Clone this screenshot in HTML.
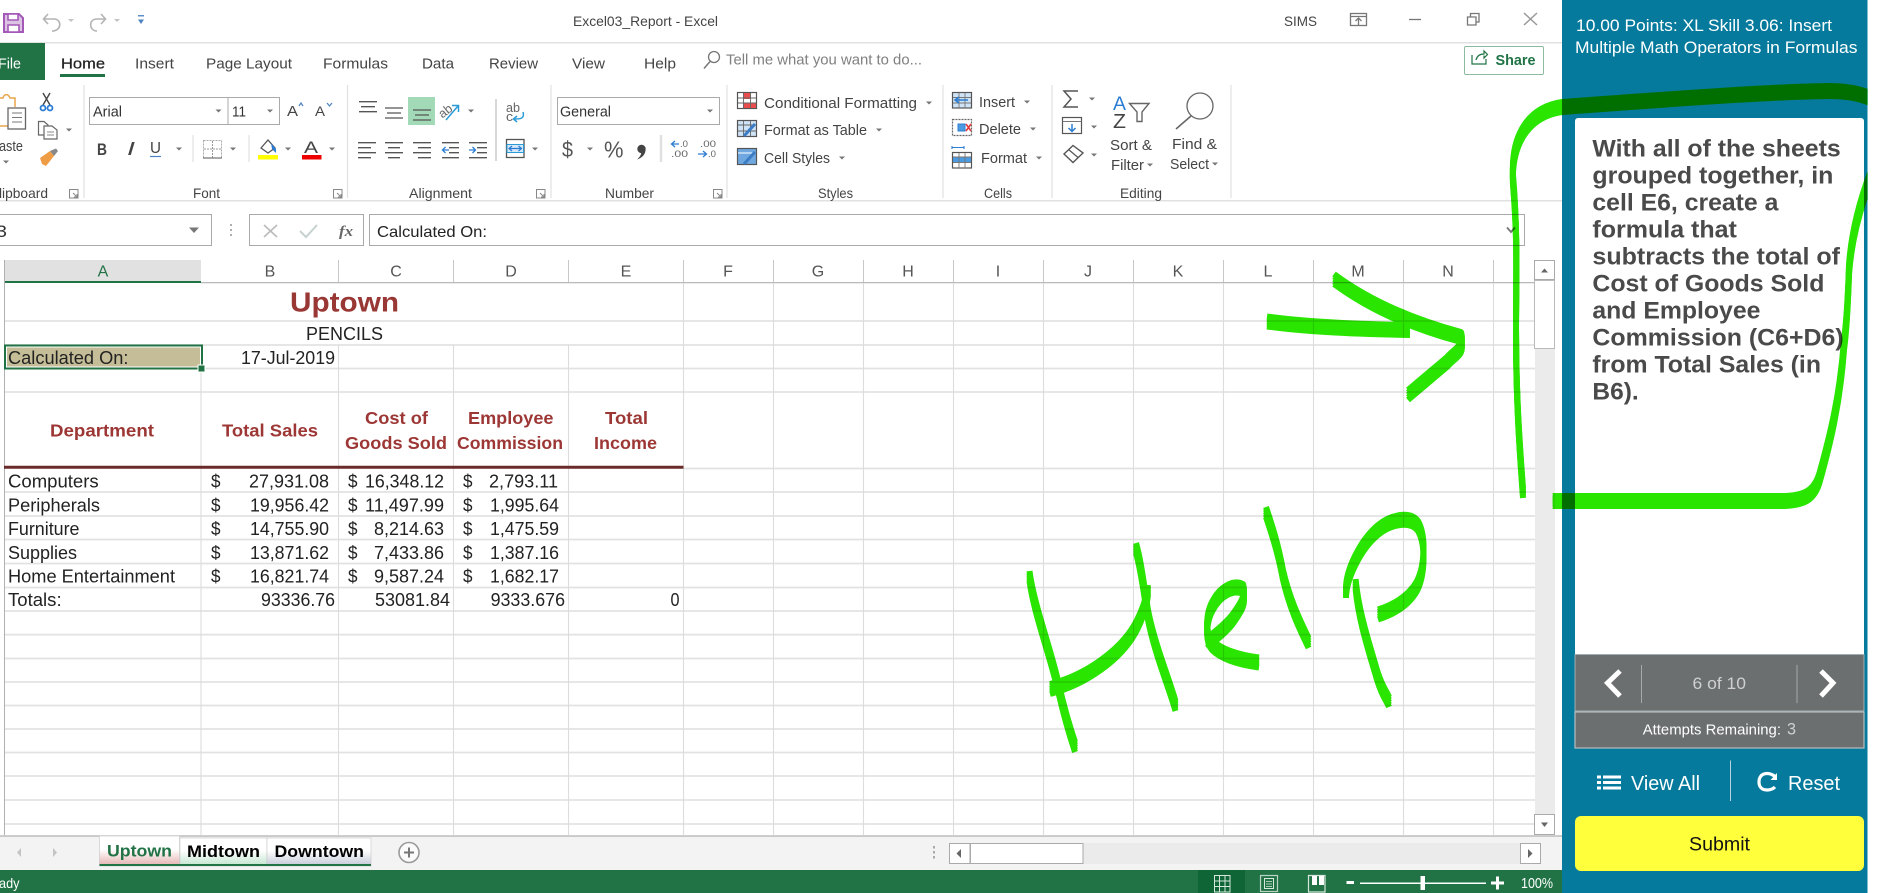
<!DOCTYPE html>
<html><head><meta charset="utf-8"><title>Excel03_Report - Excel</title>
<style>
html,body{margin:0;padding:0;background:#fff;width:1888px;height:893px;overflow:hidden}
svg{display:block;position:absolute;left:0;top:0}
text{font-family:"Liberation Sans",Arial,sans-serif;white-space:pre}
.r{font-size:14.5px;fill:#444}
.l{font-size:14px;fill:#444}
.h{font-size:16px;fill:#555;text-anchor:middle}
.s{font-size:18px;fill:#222}
.b{font-size:17.5px;fill:#9c3735;font-weight:bold}
.c{font-size:24px;fill:#4a4a4a;font-weight:bold}
.w{fill:#fff}
</style></head><body>
<svg width="1888" height="893" viewBox="0 0 1888 893" xmlns="http://www.w3.org/2000/svg">
<defs>
<linearGradient id="g1" x1="0" y1="0" x2="0" y2="1"><stop offset="0" stop-color="#fff"/><stop offset=".45" stop-color="#fff"/><stop offset="1" stop-color="#e3b0ae"/></linearGradient>
<linearGradient id="g2" x1="0" y1="0" x2="0" y2="1"><stop offset="0" stop-color="#fff"/><stop offset=".45" stop-color="#fff"/><stop offset="1" stop-color="#bfe5cd"/></linearGradient>
<linearGradient id="g3" x1="0" y1="0" x2="0" y2="1"><stop offset="0" stop-color="#fff"/><stop offset=".45" stop-color="#fff"/><stop offset="1" stop-color="#c3c8d6"/></linearGradient>
<clipPath id="inkclip"><rect x="0" y="0" width="1867.5" height="893"/></clipPath>
<path id="ink" d="M1523 493C1519 440 1516 393 1516 330C1516 280 1518 240 1513 180C1511 140 1528 112 1562 107C1660 100 1760 92 1829 91C1845 91 1858 93 1870 98
M1870 178C1858 210 1851 240 1849 270C1848 300 1846 330 1844 345C1840 400 1830 440 1820 476C1815 495 1805 501 1781 501C1700 501 1623 501 1552.7 501
M1267 321.500C1300 326 1340 329 1410 330
M1334 279C1365 302 1405 322 1461 337C1465 350 1456 352 1447 362L1408 395
M1029.500 576C1034 610 1050 650 1059 690C1066 720 1071 735 1075 747
M1050 689C1085 680 1122 655 1137 625C1143 613 1147 600 1148 590
M1136 548C1141 565 1144 590 1148 615C1155 650 1168 680 1175.500 706
M1259 662.500C1240 660 1222 655 1212 645C1204 635 1207 615 1213 605C1220 592 1233 584 1243 589C1246 598 1243 605 1232 620C1224 630 1214 637 1207 643
M1266 512C1272 530 1278 548 1283 575C1290 605 1300 625 1308.600 643
M1355.600 584C1358 610 1365 635 1375 668C1381 690 1386 695 1389 702
M1346 593C1346 575 1360 545 1378 530C1390 520 1410 515 1418 526C1426 540 1425 570 1417 586C1408 602 1392 610 1378 614.500"/>
</defs>

<!-- title bar -->
<rect x="0" y="42" width="1562" height="1.500" fill="#e1e1e1"/>
<path d="M4 14H19L23 18V32H4Z" fill="#dcc3e3" stroke="#a458b8" stroke-width="2"/>
<path d="M8 14H18V20H8ZM8 25H19V32H8Z" fill="#fff" stroke="#a458b8" stroke-width="1.600"/>
<g fill="none" stroke="#b4b4b4" stroke-width="1.600"><path d="M44 19H54C62 19 62 31 52 31M48 14L43.500 19L48 24"/><path d="M105 19H97C88 19 89 31 97 31M101 14L105.500 19L101 24"/></g>
<path d="M68 19h6l-3 3zM114 19h6l-3 3z" fill="#c4c4c4"/>
<path d="M138 15h6v1.500h-6z" fill="#5b8fc9"/><path d="M138 19.500h6l-3 4.500z" fill="#4c83c1"/>
<text x="573" y="26" class="r" style="font-size:14px" textLength="145" lengthAdjust="spacingAndGlyphs">Excel03_Report - Excel</text>
<text x="1284" y="26" class="r" style="font-size:14px" textLength="33" lengthAdjust="spacingAndGlyphs">SIMS</text>
<g fill="none" stroke="#777" stroke-width="1.300"><rect x="1350.500" y="13.500" width="16" height="12"/><path d="M1351 16.500H1366M1358.500 25V18.500M1355.500 21L1358.500 18L1361.500 21"/><path d="M1409 19.500H1421"/><path d="M1467.500 17H1476V25H1467.500ZM1470.500 17V13.500H1479V22H1476"/><path d="M1524 13L1537 25M1537 13L1524 25" stroke="#999" stroke-width="1.500"/></g>

<!-- tabs -->
<rect x="0" y="43" width="45" height="37" fill="#217346"/>
<text x="-2" y="68.500" class="w" style="font-size:15px" textLength="23" lengthAdjust="spacingAndGlyphs">File</text>
<rect x="60" y="74" width="45" height="3" fill="#217346"/>
<text x="61" y="68.500" class="r" style="fill:#222;font-size:15px;stroke:#222;stroke-width:.25" textLength="44" lengthAdjust="spacingAndGlyphs">Home</text>
<text x="135" y="68.500" class="r" textLength="39" lengthAdjust="spacingAndGlyphs">Insert</text>
<text x="206" y="68.500" class="r" textLength="86" lengthAdjust="spacingAndGlyphs">Page Layout</text>
<text x="323" y="68.500" class="r" textLength="65" lengthAdjust="spacingAndGlyphs">Formulas</text>
<text x="422" y="68.500" class="r" textLength="32" lengthAdjust="spacingAndGlyphs">Data</text>
<text x="489" y="68.500" class="r" textLength="49" lengthAdjust="spacingAndGlyphs">Review</text>
<text x="572" y="68.500" class="r" textLength="33" lengthAdjust="spacingAndGlyphs">View</text>
<text x="644" y="68.500" class="r" textLength="32" lengthAdjust="spacingAndGlyphs">Help</text>
<circle cx="714" cy="57" r="5.500" fill="none" stroke="#777" stroke-width="1.300"/><path d="M710 61.500L704 68.500" stroke="#777" stroke-width="1.500"/>
<text x="726" y="64.500" class="r" style="fill:#808080" textLength="196" lengthAdjust="spacingAndGlyphs">Tell me what you want to do...</text>
<rect x="1464.500" y="46.500" width="79" height="28" rx="1.500" fill="#fff" stroke="#8dbb9f"/>
<path d="M1472 55V64H1486V59M1476 60C1477 56 1480 54 1484 54V51L1487.500 54.500L1484 58V55.500" fill="none" stroke="#217346" stroke-width="1.200"/>
<text x="1495.500" y="65" style="font-size:14.500px;font-weight:bold;fill:#217346" textLength="40" lengthAdjust="spacingAndGlyphs">Share</text>

<!-- ribbon -->
<rect x="0" y="200" width="1562" height="1.500" fill="#e1e1e1"/>
<path d="M84 85V198M347.500 85V198M551 85V198M727 85V198M943 85V198M1052 85V198M1231 85V198" stroke="#e1e1e1" stroke-width="1.200"/>
<path d="M193 135V162M249 135V162" stroke="#e1e1e1" stroke-width="1.200"/>
<path d="M661 135V162" stroke="#e0e0e0" stroke-width="2.500"/>
<path d="M496 99V161" stroke="#d8d8d8" stroke-width="2"/>
<!-- launchers -->
<g fill="none" stroke="#888" stroke-width="1"><path d="M69.500 189.500H78V198H69.500ZM73 193L77 197M77 194V197H74"/><path d="M333.500 189.500H342V198H333.500ZM337 193L341 197M341 194V197H338"/><path d="M536.500 189.500H545V198H536.500ZM540 193L544 197M544 194V197H541"/><path d="M713.500 189.500H722V198H713.500ZM717 193L721 197M721 194V197H718"/></g>
<!-- clipboard -->
<path d="M0 98H3C4 94 8 93 10 98H15V107" fill="none" stroke="#e8a64a" stroke-width="1.500"/>
<path d="M0 126H8" stroke="#e8a64a" stroke-width="1.500"/>
<rect x="8" y="108" width="17.500" height="21" fill="#fff" stroke="#666" stroke-width="1.300"/><path d="M12 113H22M12 117.500H22M12 122H22" stroke="#777"/>
<text x="-1" y="151" class="r" textLength="24" lengthAdjust="spacingAndGlyphs">aste</text>
<g fill="none" stroke="#444" stroke-width="1.400"><path d="M43 93L50 105M50 93L43 105"/><circle cx="43" cy="108" r="2.500" stroke="#2b7cd3" stroke-width="1.800"/><circle cx="50" cy="108" r="2.500" stroke="#2b7cd3" stroke-width="1.800"/></g>
<path d="M38.500 121.500H44L48 125V135H38.500Z" fill="#fff" stroke="#666" stroke-width="1.200"/><path d="M44 126H52L57 130V139H44Z" fill="#fff" stroke="#666" stroke-width="1.200"/><path d="M47 132H54M47 135H54" stroke="#888"/>
<path d="M40 158L50 151L54 156L46 166L42 164Z" fill="#ee9c45"/><path d="M50 151L56 148.500L58 151L54 156Z" fill="#888"/>
<text x="-1" y="198" class="l" textLength="49" lengthAdjust="spacingAndGlyphs">lipboard</text>
<!-- font -->
<rect x="89.500" y="97.500" width="190" height="27" fill="#fff" stroke="#aaa"/><path d="M228 97.500V124.500" stroke="#aaa"/>
<text x="93" y="116.500" class="r" style="fill:#333" textLength="29" lengthAdjust="spacingAndGlyphs">Arial</text>
<text x="232" y="116.500" class="r" style="fill:#333" textLength="14" lengthAdjust="spacingAndGlyphs">11</text>
<text x="287" y="116" class="r" textLength="11" lengthAdjust="spacingAndGlyphs">A</text><path d="M299 106L301 103L303 106" fill="none" stroke="#4c83c1" stroke-width="1.200"/>
<text x="315" y="116" style="font-size:14px;fill:#444" textLength="10" lengthAdjust="spacingAndGlyphs">A</text><path d="M327 103L329.500 106L332 103" fill="none" stroke="#4c83c1" stroke-width="1.200"/>
<text x="97" y="155" style="font-size:17px;font-weight:bold;fill:#444" textLength="10" lengthAdjust="spacingAndGlyphs">B</text>
<text x="127" y="155" style="font-size:18px;font-style:italic;fill:#444" textLength="8" lengthAdjust="spacingAndGlyphs">I</text>
<text x="150" y="153" style="font-size:16px;fill:#444" textLength="11" lengthAdjust="spacingAndGlyphs">U</text><path d="M150 156.500H161" stroke="#4c83c1" stroke-width="1.200"/>
<path d="M203.500 140.500H221.500V158H203.500Z" fill="none" stroke="#aaa" stroke-dasharray="2 1"/><path d="M212.500 141V158M204 149H221" stroke="#999" stroke-dasharray="2 1"/><path d="M203 158H222" stroke="#777" stroke-width="1.300"/>
<path d="M261 148L268 140L275 148L268 153Z" fill="#fff" stroke="#555" stroke-width="1.300"/><path d="M271 143L276 149L276 153L272 149Z" fill="#2b7cd3"/>
<rect x="258" y="155" width="20" height="4.500" fill="#ffff00"/>
<text x="304" y="153" style="font-size:17px;fill:#444" textLength="14" lengthAdjust="spacingAndGlyphs">A</text><rect x="302" y="155" width="19.500" height="4.500" fill="#ee0000"/>
<!-- alignment -->
<rect x="408" y="97" width="27" height="28" fill="#a2d9b7"/>
<path d="M359 101.700H377M361 106.700H375M359 111.700H377M385 108H403M387 113H401M385 118H403M413 110H431M415 115H429M413 120H431" stroke="#555" stroke-width="1.300" fill="none"/>
<path d="M358 142.700H376M358 147.700H371M358 152.700H376M358 157.700H371M385 142.700H403M388 147.700H400M385 152.700H403M388 157.700H400M413 142.700H431M418 147.700H431M413 152.700H431M418 157.700H431M442 142.700H459M449 147.700H459M449 152.700H459M442 157.700H459M469 142.700H487M477 147.700H487M477 152.700H487M469 157.700H487" stroke="#555" stroke-width="1.300" fill="none"/>
<path d="M449 150H442.500M445.500 147L442.500 150L445.500 153M469 150H475.500M472.500 147L475.500 150L472.500 153" stroke="#2b7cd3" stroke-width="1.300" fill="none"/>
<text x="439" y="115" style="font-size:12.500px;fill:#666" transform="rotate(-38 446 112)" textLength="14" lengthAdjust="spacingAndGlyphs">ab</text><path d="M446 120L458 106M452 105.500H458.500V112" stroke="#2b9bd8" stroke-width="1.500" fill="none"/>
<text x="506" y="112" style="font-size:12.500px;fill:#666" textLength="14" lengthAdjust="spacingAndGlyphs">ab</text><text x="506" y="121" style="font-size:12.500px;fill:#666" textLength="7" lengthAdjust="spacingAndGlyphs">c</text><path d="M523 112C525 119 520 119 514 119M517 116L513.500 119L517 122" stroke="#2b9bd8" stroke-width="1.500" fill="none"/>
<rect x="506.500" y="139.500" width="17.500" height="18" fill="#fff" stroke="#555" stroke-width="1.300"/><rect x="507" y="144.500" width="16.500" height="8" fill="#d5e8f7" stroke="#2b9bd8" stroke-width="1"/><path d="M509.500 148.500H521M512 146L509 148.500L512 151M518.500 146L521.500 148.500L518.500 151" stroke="#2b7cd3" stroke-width="1.200" fill="none"/>
<!-- number -->
<rect x="557.500" y="97.500" width="162" height="27" fill="#fff" stroke="#aaa"/>
<text x="560" y="116.500" class="r" style="fill:#333" textLength="51" lengthAdjust="spacingAndGlyphs">General</text>
<text x="562" y="157" style="font-size:22px;fill:#555" textLength="11" lengthAdjust="spacingAndGlyphs">$</text>
<text x="604" y="157.500" style="font-size:23px;fill:#555" textLength="19.500" lengthAdjust="spacingAndGlyphs">%</text>
<circle cx="641.500" cy="149" r="4.200" fill="#444"/><path d="M645.500 149C646 154 642 158 637 159.500C640 157 641.500 154 641.500 151Z" fill="#444"/>
<text x="680" y="147" style="font-size:9px;fill:#666" textLength="8" lengthAdjust="spacingAndGlyphs">.0</text><text x="671" y="157" style="font-size:9px;fill:#666" textLength="17" lengthAdjust="spacingAndGlyphs">.00</text><path d="M679 144H672M675 141L671.500 144L675 147" stroke="#2b7cd3" stroke-width="1.300" fill="none"/>
<text x="700" y="147" style="font-size:9px;fill:#666" textLength="16" lengthAdjust="spacingAndGlyphs">.00</text><text x="708" y="157" style="font-size:9px;fill:#666" textLength="8" lengthAdjust="spacingAndGlyphs">.0</text><path d="M698 154H706M703 151L706.500 154L703 157" stroke="#2b7cd3" stroke-width="1.300" fill="none"/>
<!-- labels -->
<text x="193" y="198" class="l" textLength="27" lengthAdjust="spacingAndGlyphs">Font</text>
<text x="409" y="198" class="l" textLength="63" lengthAdjust="spacingAndGlyphs">Alignment</text>
<text x="605" y="198" class="l" textLength="49" lengthAdjust="spacingAndGlyphs">Number</text>
<text x="818" y="198" class="l" textLength="35" lengthAdjust="spacingAndGlyphs">Styles</text>
<text x="984" y="198" class="l" textLength="28" lengthAdjust="spacingAndGlyphs">Cells</text>
<text x="1120" y="198" class="l" textLength="42" lengthAdjust="spacingAndGlyphs">Editing</text>
<!-- styles -->
<rect x="737.500" y="92.500" width="19" height="16" fill="#fff" stroke="#555" stroke-width="1.200"/><path d="M743 93H751V99H743ZM743 103H756V108H743Z" fill="#e84c4c"/><path d="M738 98H756M738 103H756M743.500 93V108M750.500 93V108" stroke="#666" stroke-width=".9"/>
<text x="764" y="108" class="r" textLength="153" lengthAdjust="spacingAndGlyphs">Conditional Formatting</text>
<rect x="737.500" y="120.500" width="19" height="16" fill="#cfe3f6" stroke="#555" stroke-width="1.200"/><path d="M738 125H756M738 131H756M743.500 121V136M750.500 121V136" stroke="#666" stroke-width=".9"/><path d="M744 136L755 124" stroke="#3b7cc4" stroke-width="3"/>
<text x="764" y="135" class="r" textLength="103" lengthAdjust="spacingAndGlyphs">Format as Table</text>
<rect x="737.500" y="148.500" width="19" height="16" fill="#6fa8e0" stroke="#555" stroke-width="1.200"/><path d="M738 153H756" stroke="#fff"/><path d="M744 164L755 152" stroke="#3b7cc4" stroke-width="3"/>
<text x="764" y="163" class="r" textLength="66" lengthAdjust="spacingAndGlyphs">Cell Styles</text>
<!-- cells -->
<rect x="952.500" y="92.500" width="19" height="15.500" fill="#cfe3f6" stroke="#555" stroke-width="1.200"/><path d="M953 97.500H971M953 103H971M959 93V108M965 93V108" stroke="#777" stroke-width=".9"/><path d="M968 100H955M959 97L955 100L959 103" stroke="#2b7cd3" stroke-width="1.600" fill="none"/>
<text x="979" y="107" class="r" textLength="36" lengthAdjust="spacingAndGlyphs">Insert</text>
<rect x="952.500" y="119.500" width="19" height="16" fill="#fff" stroke="#666" stroke-width="1.200" stroke-dasharray="2 1"/><rect x="958" y="124" width="7" height="7" fill="#4c9be0" stroke="#2b7cd3"/><path d="M966 124L971 131M971 124L966 131" stroke="#e03a3a" stroke-width="1.600"/>
<text x="979" y="134" class="r" textLength="42" lengthAdjust="spacingAndGlyphs">Delete</text>
<path d="M952 147.500H964M952 146V149M964 146V149" stroke="#2b7cd3" stroke-width="1.100"/><rect x="952.500" y="152.500" width="19" height="15.500" fill="#fff" stroke="#555" stroke-width="1.200"/><rect x="953" y="157" width="18" height="5.500" fill="#4c9be0"/><path d="M953 157H971M953 162.500H971M959 153V168M965 153V168" stroke="#777" stroke-width=".9"/>
<text x="981" y="163" class="r" textLength="46" lengthAdjust="spacingAndGlyphs">Format</text>
<!-- editing -->
<path d="M1078 91H1064L1071 99L1064 107H1078" fill="none" stroke="#555" stroke-width="1.500"/>
<rect x="1062.500" y="117.500" width="19" height="16" fill="#fff" stroke="#555" stroke-width="1.200"/><path d="M1062.500 121.500H1081.500" stroke="#777"/><path d="M1072 124V131M1068.500 128L1072 131.500L1075.500 128" stroke="#2b7cd3" stroke-width="1.500" fill="none"/>
<path d="M1064 154L1073 145.500L1083 153L1073 162.500Z" fill="#fff" stroke="#555" stroke-width="1.400"/><path d="M1068.500 149.500L1078 157.500" stroke="#555" stroke-width="1.200"/>
<text x="1113" y="110" style="font-size:19px;fill:#2b7cd3" textLength="13" lengthAdjust="spacingAndGlyphs">A</text>
<text x="1113" y="128" style="font-size:20px;fill:#444" textLength="13" lengthAdjust="spacingAndGlyphs">Z</text>
<path d="M1129.500 103.500H1149L1142 112V121.500H1137V112Z" fill="#fff" stroke="#666" stroke-width="1.400"/>
<circle cx="1200" cy="106" r="13" fill="none" stroke="#666" stroke-width="1.300"/><path d="M1191 116L1176 129" stroke="#666" stroke-width="1.600"/>
<text x="1110" y="150" class="r" textLength="42" lengthAdjust="spacingAndGlyphs">Sort &amp;</text>
<text x="1111" y="170" class="r" textLength="33" lengthAdjust="spacingAndGlyphs">Filter</text>
<text x="1172" y="149" class="r" textLength="45" lengthAdjust="spacingAndGlyphs">Find &amp;</text>
<text x="1170" y="169" class="r" textLength="39" lengthAdjust="spacingAndGlyphs">Select</text>
<!-- carets -->
<path fill="#777" d="M3 160.500h6l-3 3zM66 128.500h6l-3 3zM215.500 109.500h6l-3 3zM267 109.500h6l-3 3zM176 147.500h6l-3 3zM230 147.500h6l-3 3zM285 147.500h6l-3 3zM329 147.500h6l-3 3zM468 109.500h6l-3 3zM532 147.500h6l-3 3zM707 109.500h6l-3 3zM587 147.500h6l-3 3zM926 101.500h6l-3 3zM876 128.500h6l-3 3zM839 156.500h6l-3 3zM1024 100.500h6l-3 3zM1030 127.500h6l-3 3zM1036 156.500h6l-3 3zM1089 97.500h6l-3 3zM1091 125.500h6l-3 3zM1091 153.500h6l-3 3zM1147 163.500h6l-3 3zM1212 162.500h6l-3 3z"/>

<!-- formula bar -->
<path d="M0 214.500H211.500V245.500H0" fill="#fff" stroke="#aaa"/>
<text x="-4" y="237" class="s" style="fill:#333;font-size:17px" textLength="11" lengthAdjust="spacingAndGlyphs">3</text>
<path d="M189 227.500h10l-5 5.500z" fill="#777"/>
<path d="M231 224v2M231 229v2M231 234v2" stroke="#999" stroke-width="1.600"/>
<rect x="249.500" y="214.500" width="114" height="31" fill="#fff" stroke="#aaa"/>
<path d="M264 225L277 237M277 225L264 237" stroke="#bbb" stroke-width="1.600"/>
<path d="M300 231L306 237L317 225" fill="none" stroke="#c6d2d0" stroke-width="2"/>
<text x="339" y="236" style="font-size:15px;font-style:italic;font-weight:bold;fill:#666;font-family:'Liberation Serif',serif" textLength="14" lengthAdjust="spacingAndGlyphs">fx</text>
<rect x="369.500" y="214.500" width="1155" height="31" fill="#fff" stroke="#aaa"/>
<text x="377" y="237" class="r" style="font-size:16px;fill:#222" textLength="110" lengthAdjust="spacingAndGlyphs">Calculated On:</text>
<path d="M1507 227.500L1511 232L1515 227.500" fill="none" stroke="#777" stroke-width="1.800"/>

<!-- grid -->
<rect x="4.500" y="260" width="196.500" height="22" fill="#e1e1e1"/>
<rect x="4.500" y="281" width="196.500" height="2" fill="#217346"/>
<path d="M201 282.700H1535" stroke="#b0b0b0" stroke-width="1.200"/>
<path d="M338.500 260V282M453.500 260V282M568.500 260V282M683.500 260V282M773.500 260V282M863.500 260V282M953.500 260V282M1043.500 260V282M1133.500 260V282M1223.500 260V282M1313.500 260V282M1403.500 260V282M1493.500 260V282" stroke="#c8c8c8" stroke-width="1"/>
<text x="103" y="276.700" class="h" style="fill:#217346">A</text><text x="270" y="276.700" class="h">B</text><text x="396" y="276.700" class="h">C</text><text x="511" y="276.700" class="h">D</text><text x="626" y="276.700" class="h">E</text><text x="728" y="276.700" class="h">F</text><text x="818" y="276.700" class="h">G</text><text x="908" y="276.700" class="h">H</text><text x="998" y="276.700" class="h">I</text><text x="1088" y="276.700" class="h">J</text><text x="1178" y="276.700" class="h">K</text><text x="1268" y="276.700" class="h">L</text><text x="1358" y="276.700" class="h">M</text><text x="1448" y="276.700" class="h">N</text><text x="1539.500" y="276.700" class="h">O</text>
<path d="M4 321H1535M4 345H1535M4 368.500H1535M4 392H1535M683 468.500H1535M4 492H1535M4 516H1535M4 539.500H1535M4 563.500H1535M4 587.500H1535M4 611H1535M4 634.600H1535M4 658.500H1535M4 682H1535M4 705.500H1535M4 729H1535M4 752.500H1535M4 776H1535M4 800H1535M4 824H1535" stroke="#e2e2e2" stroke-width="1.800" fill="none"/>
<path d="M201 345V835M338.500 345V835M453.500 345V835M568.500 345V835M683.500 283V835M773.500 283V835M863.500 283V835M953.500 283V835M1043.500 283V835M1133.500 283V835M1223.500 283V835M1313.500 283V835M1403.500 283V835M1493.500 283V835" stroke="#dcdcdc" stroke-width="1.100" fill="none"/>
<path d="M4.500 260V835" stroke="#b0b0b0" stroke-width="1"/>
<path d="M4 467.200H683.500" stroke="#6b2a2a" stroke-width="3"/>
<rect x="5" y="345.500" width="197" height="23" fill="#c4bd97" stroke="#217346" stroke-width="2"/>
<rect x="6.500" y="347" width="194" height="20" fill="none" stroke="#fff" stroke-width="1"/>
<rect x="198" y="365" width="7" height="7" fill="#217346" stroke="#fff" stroke-width="1"/>
<text x="290" y="311.700" style="font-size:28px;font-weight:bold;fill:#993735" textLength="109" lengthAdjust="spacingAndGlyphs">Uptown</text>
<text x="306" y="340" class="s" textLength="77" lengthAdjust="spacingAndGlyphs">PENCILS</text>
<text x="8" y="364" class="s" textLength="120.500" lengthAdjust="spacingAndGlyphs">Calculated On:</text>
<text x="241" y="364" class="s" textLength="94" lengthAdjust="spacingAndGlyphs">17-Jul-2019</text>
<text x="50" y="436.700" class="b" textLength="104" lengthAdjust="spacingAndGlyphs">Department</text>
<text x="222" y="436.700" class="b" textLength="96" lengthAdjust="spacingAndGlyphs">Total Sales</text>
<text x="365" y="424" class="b" textLength="63" lengthAdjust="spacingAndGlyphs">Cost of</text>
<text x="345" y="449" class="b" textLength="102" lengthAdjust="spacingAndGlyphs">Goods Sold</text>
<text x="468" y="424" class="b" textLength="85.500" lengthAdjust="spacingAndGlyphs">Employee</text>
<text x="457" y="449" class="b" textLength="106" lengthAdjust="spacingAndGlyphs">Commission</text>
<text x="605" y="424" class="b" textLength="43" lengthAdjust="spacingAndGlyphs">Total</text>
<text x="594" y="449" class="b" textLength="63" lengthAdjust="spacingAndGlyphs">Income</text>

<text x="8" y="487.500" class="s" textLength="90.700" lengthAdjust="spacingAndGlyphs">Computers</text>
<text x="8" y="511.500" class="s" textLength="92" lengthAdjust="spacingAndGlyphs">Peripherals</text>
<text x="8" y="535" class="s" textLength="71.500" lengthAdjust="spacingAndGlyphs">Furniture</text>
<text x="8" y="559" class="s" textLength="69" lengthAdjust="spacingAndGlyphs">Supplies</text>
<text x="8" y="582.500" class="s" textLength="167" lengthAdjust="spacingAndGlyphs">Home Entertainment</text>
<text x="8" y="606" class="s" textLength="53.600" lengthAdjust="spacingAndGlyphs">Totals:</text>
<text class="s" x="211" y="487.500" textLength="9.500" lengthAdjust="spacingAndGlyphs">$</text><text class="s" x="249" y="487.500" textLength="80" lengthAdjust="spacingAndGlyphs">27,931.08</text><text class="s" x="348" y="487.500" textLength="9.500" lengthAdjust="spacingAndGlyphs">$</text><text class="s" x="365" y="487.500" textLength="79" lengthAdjust="spacingAndGlyphs">16,348.12</text><text class="s" x="463" y="487.500" textLength="9.500" lengthAdjust="spacingAndGlyphs">$</text><text class="s" x="489" y="487.500" textLength="69" lengthAdjust="spacingAndGlyphs">2,793.11</text>
<text class="s" x="211" y="511.500" textLength="9.500" lengthAdjust="spacingAndGlyphs">$</text><text class="s" x="250" y="511.500" textLength="79" lengthAdjust="spacingAndGlyphs">19,956.42</text><text class="s" x="348" y="511.500" textLength="9.500" lengthAdjust="spacingAndGlyphs">$</text><text class="s" x="365" y="511.500" textLength="79" lengthAdjust="spacingAndGlyphs">11,497.99</text><text class="s" x="463" y="511.500" textLength="9.500" lengthAdjust="spacingAndGlyphs">$</text><text class="s" x="490" y="511.500" textLength="69" lengthAdjust="spacingAndGlyphs">1,995.64</text>
<text class="s" x="211" y="535" textLength="9.500" lengthAdjust="spacingAndGlyphs">$</text><text class="s" x="250" y="535" textLength="79" lengthAdjust="spacingAndGlyphs">14,755.90</text><text class="s" x="348" y="535" textLength="9.500" lengthAdjust="spacingAndGlyphs">$</text><text class="s" x="374" y="535" textLength="70" lengthAdjust="spacingAndGlyphs">8,214.63</text><text class="s" x="463" y="535" textLength="9.500" lengthAdjust="spacingAndGlyphs">$</text><text class="s" x="490" y="535" textLength="69" lengthAdjust="spacingAndGlyphs">1,475.59</text>
<text class="s" x="211" y="559" textLength="9.500" lengthAdjust="spacingAndGlyphs">$</text><text class="s" x="250" y="559" textLength="79" lengthAdjust="spacingAndGlyphs">13,871.62</text><text class="s" x="348" y="559" textLength="9.500" lengthAdjust="spacingAndGlyphs">$</text><text class="s" x="374" y="559" textLength="70" lengthAdjust="spacingAndGlyphs">7,433.86</text><text class="s" x="463" y="559" textLength="9.500" lengthAdjust="spacingAndGlyphs">$</text><text class="s" x="490" y="559" textLength="69" lengthAdjust="spacingAndGlyphs">1,387.16</text>
<text class="s" x="211" y="582.500" textLength="9.500" lengthAdjust="spacingAndGlyphs">$</text><text class="s" x="250" y="582.500" textLength="79" lengthAdjust="spacingAndGlyphs">16,821.74</text><text class="s" x="348" y="582.500" textLength="9.500" lengthAdjust="spacingAndGlyphs">$</text><text class="s" x="374" y="582.500" textLength="70" lengthAdjust="spacingAndGlyphs">9,587.24</text><text class="s" x="463" y="582.500" textLength="9.500" lengthAdjust="spacingAndGlyphs">$</text><text class="s" x="490" y="582.500" textLength="69" lengthAdjust="spacingAndGlyphs">1,682.17</text>
<text class="s" x="261" y="606" textLength="74" lengthAdjust="spacingAndGlyphs">93336.76</text><text class="s" x="375" y="606" textLength="75" lengthAdjust="spacingAndGlyphs">53081.84</text><text class="s" x="490.600" y="606" textLength="74.400" lengthAdjust="spacingAndGlyphs">9333.676</text><text class="s" x="670.500" y="606" textLength="9" lengthAdjust="spacingAndGlyphs">0</text>

<!-- vertical scrollbar -->
<rect x="1535" y="260" width="27" height="610" fill="#fff"/>
<rect x="1535" y="260" width="20" height="575" fill="#ebebeb"/>
<rect x="1534.500" y="260.500" width="20" height="19" fill="#fff" stroke="#aaa"/>
<path d="M1541 272.500h7l-3.500-4z" fill="#666"/>
<rect x="1534.500" y="280.500" width="20" height="68" fill="#fff" stroke="#bbb"/>
<rect x="1534.500" y="814.500" width="20" height="20" fill="#fff" stroke="#aaa"/>
<path d="M1541 822.500h7l-3.500 4.500z" fill="#666"/>

<!-- sheet tabs bar -->
<rect x="0" y="836" width="1562" height="34" fill="#f3f3f3"/>
<path d="M0 836H1562" stroke="#b0b0b0" stroke-width="1.200"/>
<path d="M21 848L17 852.500L21 857ZM53 848L57 852.500L53 857Z" fill="#c4c4c4"/>
<rect x="99.500" y="836" width="80" height="30" fill="url(#g1)" stroke="#c6c6c6" stroke-width=".6"/>
<rect x="180" y="838" width="87" height="28" fill="url(#g2)" stroke="#c6c6c6" stroke-width=".6"/>
<rect x="267" y="838" width="104" height="28" fill="url(#g3)" stroke="#c6c6c6" stroke-width=".6"/>
<rect x="99.500" y="864" width="271.500" height="2" fill="#217346"/>
<text x="107" y="856.500" style="font-size:17px;font-weight:bold;fill:#217346" textLength="65" lengthAdjust="spacingAndGlyphs">Uptown</text>
<text x="187" y="857" style="font-size:17px;font-weight:bold;fill:#000" textLength="73" lengthAdjust="spacingAndGlyphs">Midtown</text>
<text x="274.500" y="857" style="font-size:17px;font-weight:bold;fill:#000" textLength="89.500" lengthAdjust="spacingAndGlyphs">Downtown</text>
<ellipse cx="409" cy="852.500" rx="10" ry="10" fill="#fbfbfb" stroke="#9a9a9a" stroke-width="1.600"/><path d="M404 852.500H414M409 847.500V857.500" stroke="#777" stroke-width="2"/>
<path d="M934 846v2.500M934 851v2.500M934 856v2.500" stroke="#aaa" stroke-width="2"/>
<rect x="970" y="843" width="550" height="21" fill="#ebebeb"/>
<rect x="949.500" y="843.500" width="20.500" height="20" fill="#fff" stroke="#aaa"/><path d="M961 849v9l-4.500-4.500z" fill="#666"/>
<rect x="970.500" y="843.500" width="112.500" height="20" fill="#fff" stroke="#aaa"/>
<rect x="1520.500" y="843.500" width="20" height="20" fill="#fff" stroke="#aaa"/><path d="M1528 849v9l4.500-4.500z" fill="#666"/>

<!-- status bar -->
<rect x="0" y="870" width="1562" height="23" fill="#217346"/>
<text x="-1" y="888" class="w" style="font-size:14px" textLength="20.500" lengthAdjust="spacingAndGlyphs">ady</text>
<rect x="1198" y="870" width="47" height="23" fill="#0f6535"/>
<path d="M1214.500 875.500H1230V892H1214.500ZM1219.500 876V892M1225 876V892M1215 881H1230M1215 886.500H1230" fill="none" stroke="#d6e8dd" stroke-width="1"/>
<rect x="1260.500" y="875.500" width="17" height="16" fill="none" stroke="#bcd4c5" stroke-width="1.200"/><rect x="1264.500" y="878.500" width="9" height="10" fill="none" stroke="#d6e8dd"/><path d="M1266 881.500h6M1266 884h6M1266 886.500h6" stroke="#d6e8dd" stroke-width=".8"/>
<path d="M1308.500 875.500H1325V892H1308.500Z" fill="none" stroke="#d6e8dd" stroke-width="1.200"/><path d="M1312 876H1317V885H1312ZM1319 876H1324V885H1319Z" fill="#fff"/>
<rect x="1346.500" y="881" width="7.500" height="3" fill="#fff"/>
<rect x="1360" y="882.500" width="126" height="1.500" fill="#fff"/>
<rect x="1420.500" y="876" width="4.500" height="14" fill="#fff"/>
<path d="M1491 883H1504M1497.500 876.500V889.500" stroke="#fff" stroke-width="3"/>
<text x="1521" y="888" class="w" style="font-size:15px" textLength="32" lengthAdjust="spacingAndGlyphs">100%</text>

<!-- side panel -->
<rect x="1562" y="0" width="305.500" height="893" fill="#057a9c"/>
<rect x="1867" y="0" width="1" height="893" fill="#7fbccd"/>
<text x="1576" y="31" class="w" style="font-size:17px" textLength="256" lengthAdjust="spacingAndGlyphs">10.00 Points: XL Skill 3.06: Insert</text>
<text x="1575" y="53" class="w" style="font-size:17px" textLength="282.500" lengthAdjust="spacingAndGlyphs">Multiple Math Operators in Formulas</text>
<path d="M1575 654V121a3 3 0 0 1 3-3H1861a3 3 0 0 1 3 3V654Z" fill="#fff"/>
<text x="1592.400" y="156.500" class="c" textLength="248.300" lengthAdjust="spacingAndGlyphs">With all of the sheets</text>
<text x="1592.400" y="183.500" class="c" textLength="241" lengthAdjust="spacingAndGlyphs">grouped together, in</text>
<text x="1592.400" y="210.500" class="c" textLength="186" lengthAdjust="spacingAndGlyphs">cell E6, create a</text>
<text x="1592.400" y="237.500" class="c" textLength="144.500" lengthAdjust="spacingAndGlyphs">formula that</text>
<text x="1592.400" y="264.500" class="c" textLength="247.600" lengthAdjust="spacingAndGlyphs">subtracts the total of</text>
<text x="1592.400" y="291.500" class="c" textLength="232" lengthAdjust="spacingAndGlyphs">Cost of Goods Sold</text>
<text x="1592.400" y="318.500" class="c" textLength="168" lengthAdjust="spacingAndGlyphs">and Employee</text>
<text x="1592.400" y="345.500" class="c" textLength="251.300" lengthAdjust="spacingAndGlyphs">Commission (C6+D6)</text>
<text x="1592.400" y="372.500" class="c" textLength="228.600" lengthAdjust="spacingAndGlyphs">from Total Sales (in</text>
<text x="1592.400" y="399.500" class="c" textLength="46.300" lengthAdjust="spacingAndGlyphs">B6).</text>
<rect x="1575" y="654.500" width="289" height="56.500" fill="#6b6f6f" stroke="#b8bcbc" stroke-width=".8"/>
<rect x="1575" y="712" width="289" height="36" fill="#6b6f6f" stroke="#b8bcbc" stroke-width="1.200"/>
<path d="M1641.500 665V703M1797 665V703" stroke="#a6aaaa" stroke-width="1"/>
<path d="M1620 671L1607.500 683L1620 696" fill="none" stroke="#fff" stroke-width="5"/>
<path d="M1821 671L1833 683L1821 696" fill="none" stroke="#fff" stroke-width="5"/>
<text x="1692.500" y="689" style="font-size:17px;fill:#d0d0d0" textLength="53.500" lengthAdjust="spacingAndGlyphs">6 of 10</text>
<text x="1642.700" y="734.400" class="w" style="font-size:15px" textLength="138.300" lengthAdjust="spacingAndGlyphs">Attempts Remaining:</text>
<text x="1787" y="734.400" style="font-size:17px;fill:#d0d0d0" textLength="9" lengthAdjust="spacingAndGlyphs">3</text>
<path d="M1597 775.500h4v3h-4zM1597 781h4v3h-4zM1597 786.500h4v3h-4z" fill="#fff"/><path d="M1603 777H1621M1603 782.500H1621M1603 788H1621" stroke="#fff" stroke-width="3"/>
<text x="1631" y="790" class="w" style="font-size:20px" textLength="69" lengthAdjust="spacingAndGlyphs">View All</text>
<path d="M1730.500 760.500V801" stroke="#b7d4de" stroke-width="1"/>
<path d="M1775 776.500C1772 774 1769 773.500 1767 773.500C1761 773.500 1759 778 1759 782C1759 787 1762 790 1767 790C1770 790 1773 789 1775 787" fill="none" stroke="#fff" stroke-width="3.200"/><path d="M1770.500 780L1777 780L1777 773Z" fill="#fff"/>
<text x="1788" y="790" class="w" style="font-size:20px" textLength="52" lengthAdjust="spacingAndGlyphs">Reset</text>
<rect x="1575" y="816" width="289" height="55" rx="6" fill="#ffff3b"/>
<text x="1689" y="850.500" style="font-size:19px;fill:#111" textLength="61" lengthAdjust="spacingAndGlyphs">Submit</text>

<!-- green ink: clip and blend on the same element so multiply reaches the page -->
<g clip-path="url(#inkclip)" style="mix-blend-mode:multiply" fill="none" stroke="#2ae500" stroke-width="6" stroke-linejoin="round">
<use href="#ink" y="-5"/><use href="#ink" y="-2.500"/><use href="#ink"/><use href="#ink" y="2.500"/><use href="#ink" y="5"/>
</g>
</svg>
</body></html>
